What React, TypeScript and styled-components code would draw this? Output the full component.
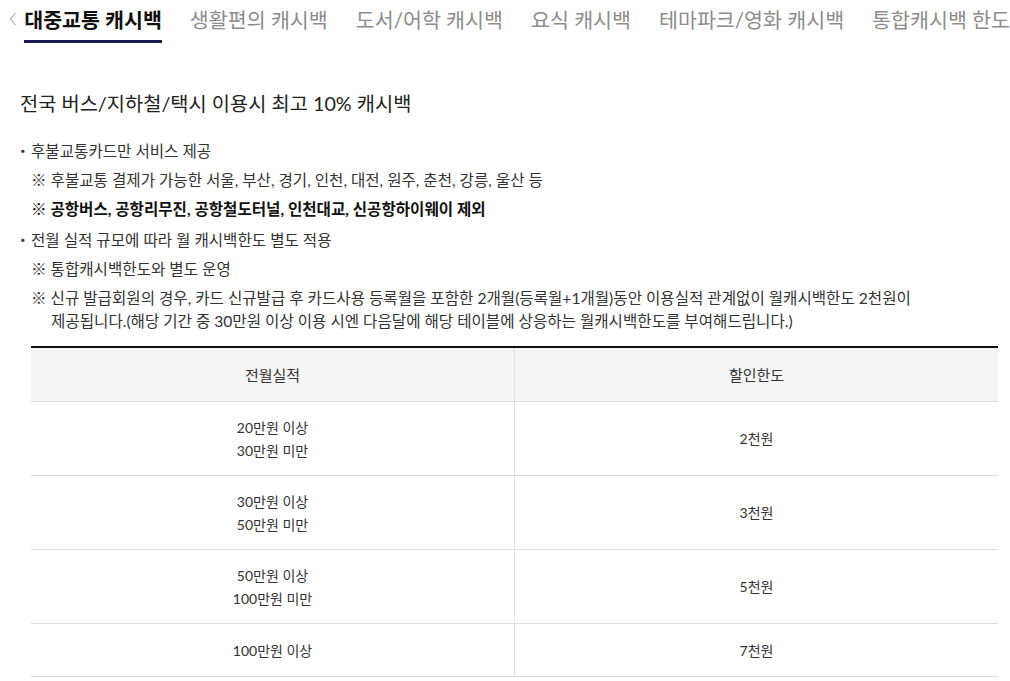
import styled, { createGlobalStyle } from 'styled-components';

const GlobalStyle = createGlobalStyle`
  body {
    margin: 0;
    background: #ffffff;
    font-family: Lato, "Noto Sans CJK KR", sans-serif;
    color: #222222;
  }
`;

const Page = styled.div`
  width: 1010px;
  height: 681px;
  overflow: hidden;
`;

const TabBar = styled.nav`
  display: flex;
  align-items: flex-start;
  height: 44px;
  padding-left: 9px;
  white-space: nowrap;
  overflow: hidden;
`;

const Arrow = styled.span`
  display: flex;
  align-items: center;
  width: 19px;
  height: 38px;
`;

const TabList = styled.div`
  display: flex;
  gap: 28px;
`;

const Tab = styled.button<{ $active?: boolean }>`
  border: none;
  background: none;
  padding: 0;
  height: 43px;
  font-family: inherit;
  font-size: 20.6px;
  font-weight: ${({ $active }) => ($active ? 700 : 400)};
  color: ${({ $active }) => ($active ? '#111111' : '#8c8c8c')};
  border-bottom: 3px solid ${({ $active }) => ($active ? '#121a4e' : 'transparent')};
  line-height: 38px;
  cursor: pointer;
`;

const Content = styled.section`
  padding: 44px 12px 0 20px;
`;

const Heading = styled.h2`
  margin: 0 0 19px;
  font-size: 19.8px;
  font-weight: 400;
  color: #222222;
  line-height: 30px;
`;

const List = styled.ul`
  margin: 0;
  padding: 0;
  list-style: none;
`;

const Item = styled.li`
  position: relative;
  padding-left: 11px;
  font-size: 15.6px;
  line-height: 29px;
  color: #333333;

  & + p + p + & {
    margin-top: 2px;
  }

  &::before {
    content: '・';
    position: absolute;
    left: -5px;
  }
`;

const Note = styled.p<{ $bold?: boolean }>`
  margin: 0;
  padding-left: 11px;
  font-size: 15.6px;
  line-height: 29px;
  color: ${({ $bold }) => ($bold ? '#111111' : '#333333')};
  font-weight: ${({ $bold }) => ($bold ? 700 : 400)};
`;

const LongNote = styled(Note)`
  line-height: 23px;
  padding-top: 3px;
  padding-left: 31px;
  text-indent: -20px;
`;

const Table = styled.table`
  width: 967px;
  margin: 13px 0 0 11px;
  border-collapse: collapse;
  border-top: 2px solid #111111;
  table-layout: fixed;
`;

const Th = styled.th`
  height: 53px;
  padding: 0;
  background: #f5f5f5;
  font-size: 15px;
  font-weight: 400;
  color: #333333;
  border-bottom: 1px solid #dddddd;
  & + & {
    border-left: 1px solid #e2e2e2;
  }
`;

const Td = styled.td<{ $short?: boolean }>`
  height: ${({ $short }) => ($short ? '52px' : '73px')};
  padding: 0;
  text-align: center;
  font-size: 14px;
  line-height: 23px;
  color: #333333;
  border-bottom: 1px solid #dddddd;
  & + & {
    border-left: 1px solid #e2e2e2;
  }
`;

const tabs = ['대중교통 캐시백', '생활편의 캐시백', '도서/어학 캐시백', '요식 캐시백', '테마파크/영화 캐시백', '통합캐시백 한도'];

const rows = [
  { spend: ['20만원 이상', '30만원 미만'], limit: '2천원' },
  { spend: ['30만원 이상', '50만원 미만'], limit: '3천원' },
  { spend: ['50만원 이상', '100만원 미만'], limit: '5천원' },
  { spend: ['100만원 이상'], limit: '7천원' },
];

export default function App() {
  return (
    <Page>
      <GlobalStyle />
      <TabBar>
        <Arrow>
          <svg width="8" height="14" viewBox="0 0 8 14">
            <polyline points="6.5,1 1.5,7 6.5,13" fill="none" stroke="#a8a8a8" strokeWidth="1.1" />
          </svg>
        </Arrow>
        <TabList>
          {tabs.map((t, i) => (
            <Tab key={t} $active={i === 0}>
              {t}
            </Tab>
          ))}
        </TabList>
      </TabBar>
      <Content>
        <Heading>전국 버스/지하철/택시 이용시 최고 10% 캐시백</Heading>
        <List>
          <Item>후불교통카드만 서비스 제공</Item>
          <Note>※ 후불교통 결제가 가능한 서울, 부산, 경기, 인천, 대전, 원주, 춘천, 강릉, 울산 등</Note>
          <Note $bold>※ 공항버스, 공항리무진, 공항철도터널, 인천대교, 신공항하이웨이 제외</Note>
          <Item>전월 실적 규모에 따라 월 캐시백한도 별도 적용</Item>
          <Note>※ 통합캐시백한도와 별도 운영</Note>
          <LongNote>
            ※ 신규 발급회원의 경우, 카드 신규발급 후 카드사용 등록월을 포함한 2개월(등록월+1개월)동안 이용실적 관계없이 월캐시백한도 2천원이
            <br />
            제공됩니다.(해당 기간 중 30만원 이상 이용 시엔 다음달에 해당 테이블에 상응하는 월캐시백한도를 부여해드립니다.)
          </LongNote>
        </List>
        <Table>
          <thead>
            <tr>
              <Th>전월실적</Th>
              <Th>할인한도</Th>
            </tr>
          </thead>
          <tbody>
            {rows.map((r) => (
              <tr key={r.limit}>
                <Td $short={r.spend.length === 1}>
                  {r.spend.map((s) => (
                    <div key={s}>{s}</div>
                  ))}
                </Td>
                <Td $short={r.spend.length === 1}>{r.limit}</Td>
              </tr>
            ))}
          </tbody>
        </Table>
      </Content>
    </Page>
  );
}
